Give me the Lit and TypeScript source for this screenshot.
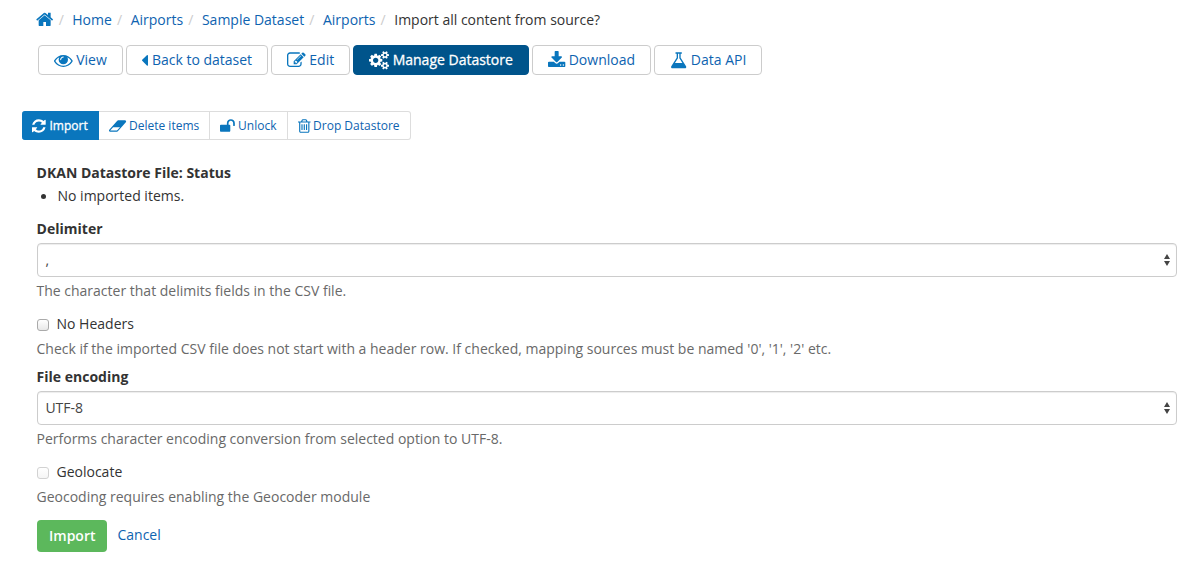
import { LitElement, html, css, svg } from "lit";
import { customElement } from "lit/decorators.js";

type Icon = { box: string; w: number; d: string };

// Each glyph keeps its own advance width on a 1792-unit em.
const icons: Record<string, Icon> = {
  home: { box: "64 0 1664 1792", w: 1664, d: "M1472 992v480q0 26-19 45t-45 19h-384v-384h-256v384h-384q-26 0-45-19t-19-45v-480q0-1 .5-3t.5-3l575-474 575 474q1 2 1 6zm223-69l-62 74q-8 9-21 11h-3q-13 0-21-7l-692-577-692 577q-12 8-24 7-13-2-21-11l-62-74q-8-10-7-23.5t11-21.5l719-599q32-26 76-26t76 26l244 204v-195q0-14 9-23t23-9h192q14 0 23 9t9 23v408l219 182q10 8 11 21.5t-7 23.5z" },
  eye: { box: "0 0 1792 1792", w: 1792, d: "M1664 960q-152-236-381-353 61 104 61 225 0 185-131.5 316.5t-316.5 131.5-316.5-131.5-131.5-316.5q0-121 61-225-229 117-381 353 133 205 333.5 326.5t434.5 121.5 434.5-121.5 333.5-326.5zm-720-384q0-20-14-34t-34-14q-125 0-214.5 89.5t-89.5 214.5q0 20 14 34t34 14 34-14 14-34q0-86 61-147t147-61q20 0 34-14t14-34zm848 384q0 34-20 69-140 230-376.5 368.5t-499.5 138.5-499.5-139-376.5-368q-20-35-20-69t20-69q140-229 376.5-368t499.5-139 499.5 139 376.5 368q20 35 20 69z" },
  caret: { box: "0 0 640 1792", w: 640, d: "M576 448v896q0 26-19 45t-45 19-45-19l-448-448q-19-19-19-45t19-45l448-448q19-19 45-19t45 19 19 45z" },
  edit: { box: "0 0 1792 1792", w: 1792, d: "M888 1184l116-116-152-152-116 116v56h96v96h56zm440-720q-16-16-33 1l-350 350q-17 17-1 33t33-1l350-350q17-17 1-33zm80 594v190q0 119-84.5 203.5t-203.5 84.5h-832q-119 0-203.5-84.5t-84.5-203.5v-832q0-119 84.5-203.5t203.5-84.5h832q63 0 117 25 15 7 18 23 3 17-9 29l-49 49q-14 14-32 8-23-6-45-6h-832q-66 0-113 47t-47 113v832q0 66 47 113t113 47h832q66 0 113-47t47-113v-126q0-13 9-22l64-64q15-15 35-7t20 29zm-96-738l288 288-672 672h-288v-288zm444 132l-92 92-288-288 92-92q28-28 68-28t68 28l152 152q28 28 28 68t-28 68z" },
  cogs: { box: "0 0 1920 1792", w: 1920, d: "M896 896q0-106-75-181t-181-75-181 75-75 181 75 181 181 75 181-75 75-181zm768 512q0-52-38-90t-90-38-90 38-38 90q0 53 37.5 90.5t90.5 37.5 90.5-37.5 37.5-90.5zm0-1024q0-52-38-90t-90-38-90 38-38 90q0 53 37.5 90.5t90.5 37.5 90.5-37.5 37.5-90.5zm-384 421v185q0 10-7 19.5t-16 10.5l-155 24q-11 35-32 76 34 48 90 115 7 11 7 20 0 12-7 19-23 30-82.5 89.5t-78.5 59.5q-11 0-21-7l-115-90q-37 19-77 31-11 108-23 155-7 24-30 24h-186q-11 0-20-7.5t-10-17.5l-23-153q-34-10-75-31l-118 89q-7 7-20 7-11 0-21-8-144-133-144-160 0-9 7-19 10-14 41-53t47-61q-23-44-35-82l-152-24q-10-1-17-9.5t-7-19.5v-185q0-10 7-19.5t16-10.5l155-24q11-35 32-76-34-48-90-115-7-11-7-20 0-12 7-20 22-30 82-89t79-59q11 0 21 7l115 90q34-18 77-32 11-108 23-154 7-24 30-24h186q11 0 20 7.5t10 17.5l23 153q34 10 75 31l118-89q8-7 20-7 11 0 21 8 144 133 144 160 0 8-7 19-12 16-42 54t-45 60q23 48 34 82l152 23q10 2 17 10.5t7 19.5zm640 533v140q0 16-149 31-12 27-30 52 51 113 51 138 0 4-4 7-122 71-124 71-8 0-46-47t-52-68q-20 2-30 2t-30-2q-14 21-52 68t-46 47q-2 0-124-71-4-3-4-7 0-25 51-138-18-25-30-52-149-15-149-31v-140q0-16 149-31 13-29 30-52-51-113-51-138 0-4 4-7 4-2 35-20t59-34 30-16q8 0 46 46.5t52 67.5q20-2 30-2t30 2q51-71 92-112l6-2q4 0 124 70 4 3 4 7 0 25-51 138 17 23 30 52 149 15 149 31zm0-1024v140q0 16-149 31-12 27-30 52 51 113 51 138 0 4-4 7-122 71-124 71-8 0-46-47t-52-68q-20 2-30 2t-30-2q-14 21-52 68t-46 47q-2 0-124-71-4-3-4-7 0-25 51-138-18-25-30-52-149-15-149-31v-140q0-16 149-31 13-29 30-52-51-113-51-138 0-4 4-7 4-2 35-20t59-34 30-16q8 0 46 46.5t52 67.5q20-2 30-2t30 2q51-71 92-112l6-2q4 0 124 70 4 3 4 7 0 25-51 138 17 23 30 52 149 15 149 31z" },
  download: { box: "64 0 1664 1792", w: 1664, d: "M1344 1344q0-26-19-45t-45-19-45 19-19 45 19 45 45 19 45-19 19-45zm256 0q0-26-19-45t-45-19-45 19-19 45 19 45 45 19 45-19 19-45zm128-224v320q0 40-28 68t-68 28h-1472q-40 0-68-28t-28-68v-320q0-40 28-68t68-28h465l135 136q58 56 136 56t136-56l136-136h464q40 0 68 28t28 68zm-325-569q17 41-14 70l-448 448q-18 19-45 19t-45-19l-448-448q-31-29-14-70 17-39 59-39h256v-448q0-26 19-45t45-19h256q26 0 45 19t19 45v448h256q42 0 59 39z" },
  flask: { box: "64 0 1664 1792", w: 1664, d: "M1591 1448q56 89 21.5 152.5t-140.5 63.5h-1152q-106 0-140.5-63.5t21.5-152.5l503-793v-399h-64q-26 0-45-19t-19-45 19-45 45-19h512q26 0 45 19t19 45-19 45-45 19h-64v399zm-779-725l-272 429h712l-272-429-20-31v-436h-128v436z" },
  refresh: { box: "128 0 1536 1792", w: 1536, d: "M1639 1056q0 5-1 7-64 268-268 434.5t-478 166.5q-146 0-282.5-55t-243.5-157l-129 129q-19 19-45 19t-45-19-19-45v-448q0-26 19-45t45-19h448q26 0 45 19t19 45-19 45l-137 137q71 66 161 102t187 36q134 0 250-65t186-179q11-17 53-117 8-23 30-23h192q13 0 22.5 9.5t9.5 22.5zm25-800v448q0 26-19 45t-45 19h-448q-26 0-45-19t-19-45 19-45l138-138q-148-137-349-137-134 0-250 65t-186 179q-11 17-53 117-8 23-30 23h-199q-13 0-22.5-9.5t-9.5-22.5v-7q65-268 270-434.5t480-166.5q146 0 284 55.5t245 156.5l130-129q19-19 45-19t45 19 19 45z" },
  eraser: { box: "64 0 1920 1792", w: 1920, d: "M960 1408l336-384h-768l-336 384h768zm1013-1077q15 34 9.5 71.5t-30.5 65.5l-896 1024q-38 44-96 44h-768q-38 0-69.5-20.5t-47.5-54.5q-15-34-9.5-71.5t30.5-65.5l896-1024q38-44 96-44h768q38 0 69.5 20.5t47.5 54.5z" },
  unlock: { box: "64 0 1664 1792", w: 1664, d: "M1728 576v256q0 26-19 45t-45 19h-64q-26 0-45-19t-19-45v-256q0-106-75-181t-181-75-181 75-75 181v192h96q40 0 68 28t28 68v576q0 40-28 68t-68 28h-960q-40 0-68-28t-28-68v-576q0-40 28-68t68-28h672v-192q0-185 131.5-316.5t316.5-131.5 316.5 131.5 131.5 316.5z" },
  trash: { box: "192 0 1408 1792", w: 1408, d: "M704 736v576q0 14-9 23t-23 9h-64q-14 0-23-9t-9-23v-576q0-14 9-23t23-9h64q14 0 23 9t9 23zm256 0v576q0 14-9 23t-23 9h-64q-14 0-23-9t-9-23v-576q0-14 9-23t23-9h64q14 0 23 9t9 23zm256 0v576q0 14-9 23t-23 9h-64q-14 0-23-9t-9-23v-576q0-14 9-23t23-9h64q14 0 23 9t9 23zm128 724v-948h-896v948q0 22 7 40.5t14.5 27 10.5 8.5h832q3 0 10.5-8.5t14.5-27 7-40.5zm-672-1076h448l-48-117q-7-9-17-11h-317q-10 2-17 11zm928 32v64q0 14-9 23t-23 9h-96v948q0 83-47 143.5t-113 60.5h-832q-66 0-113-58.5t-47-141.5v-952h-96q-14 0-23-9t-9-23v-64q0-14 9-23t23-9h309l70-167q15-37 54-63t79-26h320q40 0 79 26t54 63l70 167h309q14 0 23 9t9 23z" },
};

const icon = (name: string, em: number) => {
  const i = icons[name];
  return html`<svg class="icon" viewBox=${i.box} width=${((i.w / 1792) * em).toFixed(2)} height=${em}>${svg`<path d=${i.d}></path>`}</svg>`;
};

@customElement("app-root")
export class AppRoot extends LitElement {
  static styles = css`
    :host {
      display: block;
      box-sizing: border-box;
      height: 564px;
      overflow: hidden;
      background: #fff;
      color: #333;
      font: 14px/20px "Open Sans", sans-serif;
    }
    * { box-sizing: border-box; }
    a { color: #0e63b0; text-decoration: none; }
    .icon { display: block; flex: none; fill: #0a76bd; overflow: visible; }
    .crumbs { display: flex; align-items: center; height: 20px; margin: 10px 0 15px 36.4px; white-space: pre; }
    .crumbs .icon { margin-top: -2px; }
    .sep { color: #ccc; padding: 0 5px; }
    .crumbs .sep:first-of-type { padding-right: 4.8px; }
    .tabs { display: flex; gap: 3px; margin-left: 38px; }
    .tab {
      display: flex; align-items: center; gap: 3.5px;
      height: 30px; padding: 0 15px;
      border: 1px solid #ccc; border-radius: 4px; white-space: nowrap;
    }
    .tab.on { background: #00548b; border-color: #00548b; color: #fff; -webkit-text-stroke: 0.3px #fff; }
    .on .icon { fill: #fff; }
    .group { display: flex; margin: 36px 0 0 22px; font-size: 12px; line-height: 18px; }
    .act {
      display: flex; align-items: center; gap: 3px;
      height: 29px; padding: 0 10px;
      border: 1px solid #ddd; border-left-width: 0; white-space: nowrap;
    }
    .act.on { background: #0a76bd; border-color: #0a76bd; color: #fff; border-radius: 3px 0 0 3px; -webkit-text-stroke: 0.3px #fff; gap: 3.8px; padding-right: 10.2px; }
    .act:last-child { border-radius: 0 3px 3px 0; padding-right: 10.6px; }
    .form { margin: 23px 25px 0 37px; }
    .label { font-weight: 700; height: 20px; text-indent: -0.4px; }
    .status { display: flex; align-items: center; height: 20px; margin: 3px 0 13px; padding-left: 4px; gap: 11.5px; }
    .dot { width: 5px; height: 5px; border-radius: 50%; background: #333; }
    .select {
      display: flex; align-items: center; justify-content: space-between;
      height: 34px; margin: 4px 0; padding: 0 5px 0 7.4px;
      border: 1px solid #ccc; border-radius: 4px; color: #444;
      box-shadow: inset 0 1px 1px rgba(0, 0, 0, 0.075);
    }
    .arrows { display: block; fill: #444; }
    .help { color: #696969; height: 20px; text-indent: -0.5px; }
    .check { display: flex; align-items: center; gap: 7.5px; height: 20px; margin: 13px 0 5px; }
    .box {
      width: 12px; height: 12px; margin-top: 2px; border: 1px solid #aaa; border-radius: 3px;
      background: linear-gradient(#fff, #e8e8e8);
    }
    .box.off { border-color: #d2d2d2; background: linear-gradient(#fff, #f5f5f5); }
    .next { margin-top: 8px; }
    .actions { display: flex; gap: 10px; margin-top: 13px; line-height: 30px; }
    .submit {
      height: 32px; padding: 0 12px; border-radius: 4px; line-height: 32px;
      background: #5cb85c; color: #fff; font-weight: 600;
    }
  `;

  private crumb(text: string) {
    return html`<a>${text}</a><span class="sep">/ </span>`;
  }

  private tab(name: string, text: string, on = false) {
    return html`<a class="tab ${on ? "on" : ""}">${icon(name, 18.67)}<span>${text}</span></a>`;
  }

  private act(name: string, text: string, on = false) {
    return html`<a class="act ${on ? "on" : ""}">${icon(name, 16)}<span>${text}</span></a>`;
  }

  private select(value: string) {
    return html`<div class="select"><span>${value}</span>
      <svg class="arrows" width="8" height="14" viewBox="0 0 8 14"><path d="M4 1L7 6H1zM4 13L1 8H7z" /></svg></div>`;
  }

  render() {
    return html`
      <nav class="crumbs">${icon("home", 18.67)}<span class="sep">/ </span>${this.crumb("Home")}${this.crumb("Airports")}${this.crumb("Sample Dataset")}${this.crumb("Airports")}<span>Import all content from source?</span></nav>
      <div class="tabs">
        ${this.tab("eye", "View")}${this.tab("caret", "Back to dataset")}${this.tab("edit", "Edit")}
        ${this.tab("cogs", "Manage Datastore", true)}${this.tab("download", "Download")}${this.tab("flask", "Data API")}
      </div>
      <div class="group">
        ${this.act("refresh", "Import", true)}${this.act("eraser", "Delete items")}
        ${this.act("unlock", "Unlock")}${this.act("trash", "Drop Datastore")}
      </div>
      <div class="form">
        <div class="label">DKAN Datastore File: Status</div>
        <div class="status"><i class="dot"></i><span>No imported items.</span></div>
        <div class="label">Delimiter</div>
        ${this.select(",")}
        <div class="help">The character that delimits fields in the CSV file.</div>
        <div class="check"><i class="box"></i><span>No Headers</span></div>
        <div class="help">Check if the imported CSV file does not start with a header row. If checked, mapping sources must be named '0', '1', '2' etc.</div>
        <div class="label next">File encoding</div>
        ${this.select("UTF-8")}
        <div class="help">Performs character encoding conversion from selected option to UTF-8.</div>
        <div class="check"><i class="box off"></i><span>Geolocate</span></div>
        <div class="help">Geocoding requires enabling the Geocoder module</div>
        <div class="actions"><span class="submit">Import</span><a>Cancel</a></div>
      </div>
    `;
  }
}
